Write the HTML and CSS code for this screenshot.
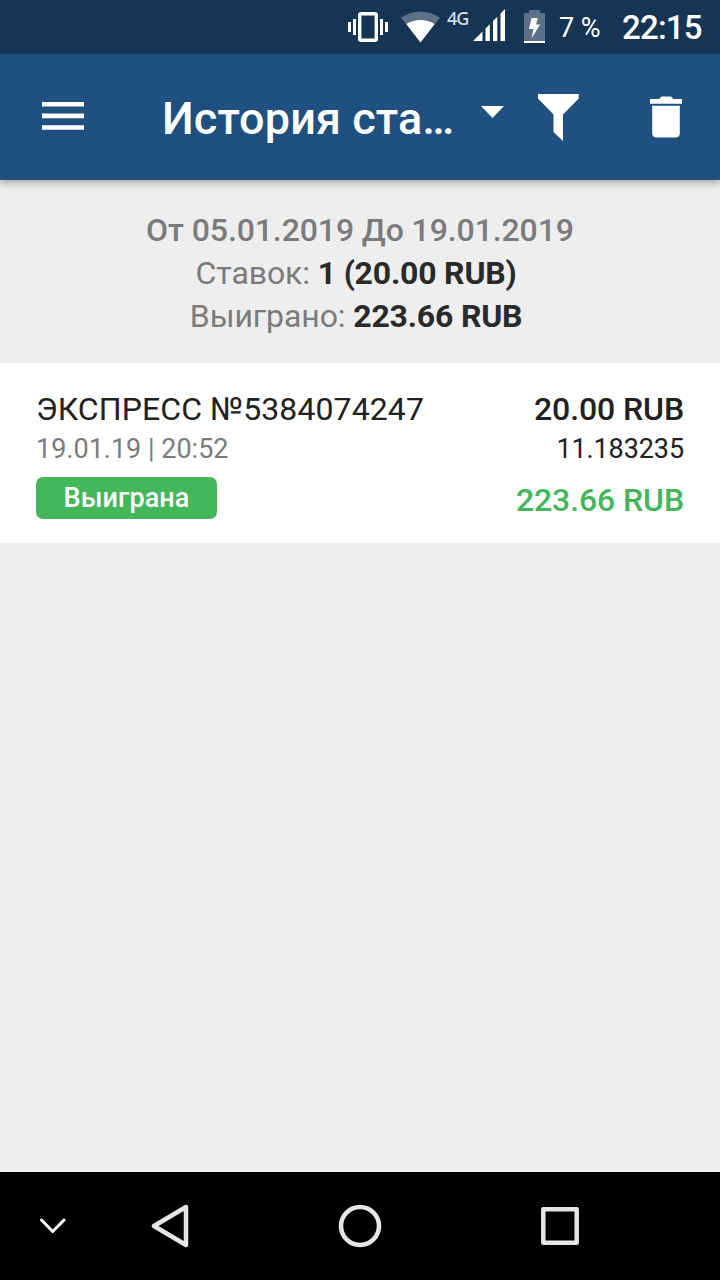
FILE: index.html
```
<!DOCTYPE html>
<html lang="ru">

<head>
	<meta charset="utf-8">
	<meta name="viewport" content="width=device-width, initial-scale=1.0">
	<title>История ставок</title>
	<link rel="stylesheet" href="styles.css">
</head>

<body>
	<div class="statusbar">
		<svg class="vibrate" width="40" height="30" viewBox="0 0 40 30">
			<rect x="11.7" y="1.7" width="16.6" height="26.6" rx="1.5" fill="none" stroke="#fff" stroke-width="3.4" />
			<path d="M1.5 10v10M6.5 7v16M33.500 7v16M38.500 10v10" stroke="#fff" stroke-width="3" />
		</svg>
		<svg class="wifi" width="39" height="32" viewBox="0 0 40 32">
			<path d="M0 6.500Q20-6.500 40 6.500L20 32Z" fill="#5c7089" />
			<path d="M5.500 13Q20 4.500 34.500 13L20 32Z" fill="#fff" />
		</svg>
		<span class="network">4G</span>
		<svg class="signal" width="32" height="32" viewBox="0 0 32 32">
			<path d="M0 32L9.500 22.500V32ZM12.500 19.500L16.800 15.200V32H12.500ZM20 12L24.300 7.700V32H20ZM27.500 4.500L32 0V32H27.500Z" fill="#fff" />
		</svg>
		<svg class="battery" width="21" height="33" viewBox="0 0 21 33">
			<path d="M0 3H5V0H16V3H21V31H0Z" fill="#5c7089" />
			<path d="M0 31H21V33H0Z" fill="#fff" />
			<path d="M7.500 8H14L12 14.500H16L7.500 28.500L9.500 19H5Z" fill="#fff" />
		</svg>
		<span class="percent">7 %</span>
		<span class="clock">22:15</span>
	</div>

	<header>
		<svg class="menu" width="42" height="29" viewBox="0 0 42 29">
			<path d="M0 2.300H42M0 13.900H42M0 25.500H42" stroke="#fff" stroke-width="4.600" />
		</svg>
		<h1>История ста…</h1>
		<svg class="arrow" width="23" height="12" viewBox="0 0 23 12">
			<path d="M0 0H23L11.500 12Z" fill="#fff" />
		</svg>
		<svg class="filter" width="42" height="48" viewBox="0 0 42 48">
			<path d="M0 0H40.700V4.500L25 20.500V47L15.500 38V20.500L0 4.500Z" fill="#fff" />
		</svg>
		<svg class="trash" width="32" height="42" viewBox="0 0 32 42">
			<path d="M0 3H9L11.500 .5H21L23.500 3H32V7.700H0Z" fill="#fff" />
			<path d="M2.200 9.700H29.800V37Q29.800 41.500 25.300 41.500H6.700Q2.200 41.500 2.200 37Z" fill="#fff" />
		</svg>
	</header>

	<main>
		<section class="summary">
			<p class="period">От 05.01.2019 До 19.01.2019</p>
			<p>Ставок: <b>1 (20.00 RUB)</b>&nbsp;</p>
			<p>Выиграно: <b>223.66 RUB</b>&nbsp;</p>
		</section>

		<article class="bet">
			<div class="bet_info">
				<h2>ЭКСПРЕСС №5384074247</h2>
				<p class="date">19.01.19 | 20:52</p>
				<span class="status">Выиграна</span>
			</div>
			<div class="bet_sum">
				<p class="stake">20.00 RUB</p>
				<p class="odds">11.183235</p>
				<p class="win">223.66 RUB</p>
			</div>
		</article>
	</main>

	<nav>
		<svg class="hide" width="28" height="16" viewBox="0 0 28 16">
			<path d="M2.500 2L13.700 13.500L25 2" />
		</svg>
		<svg class="back" width="38" height="44" viewBox="0 0 38 44">
			<path d="M35 3V41L3 22Z" />
		</svg>
		<svg class="home" width="44" height="44" viewBox="0 0 44 44">
			<circle cx="22" cy="22" r="19" />
		</svg>
		<svg class="recent" width="38" height="38" viewBox="0 0 38 38">
			<rect x="2.300" y="2.300" width="33.400" height="33.400" />
		</svg>
	</nav>
</body>

</html>
```
FILE: styles.css
```
* {
	margin: 0;
	box-sizing: border-box;
}

body {
	display: flex;
	flex-direction: column;
	height: 1280px;
	background-color: #eeeeee;
	font-family: Roboto, "Liberation Sans", sans-serif;
	color: #212121;
}

svg {
	display: block;
	flex-shrink: 0;
}

/* status bar */
.statusbar {
	display: flex;
	align-items: flex-start;
	height: 54px;
	padding-left: 348px;
	background-color: #163453;
	color: #fff;
	white-space: nowrap;
}

.vibrate {
	margin-top: 12px;
}

.wifi {
	margin: 11px 0 0 13px;
}

.network {
	width: 26px;
	margin: 7px 0 0 7px;
	font: 500 18px/22px "Noto Sans", sans-serif;
	letter-spacing: -1px;
	color: #d8dee5;
}

.signal {
	margin-top: 9px;
}

.battery {
	margin: 10px 0 0 19px;
}

.percent {
	width: 63px;
	margin: 12px 0 0 14px;
	font-size: 27px;
	line-height: 32px;
}

.clock {
	margin-top: 9px;
	font-size: 33px;
	font-weight: 500;
	line-height: 38px;
	letter-spacing: -0.8px;
}

/* header */
header {
	display: flex;
	align-items: flex-start;
	height: 126px;
	padding-left: 42px;
	background-color: #20507f;
	box-shadow: 0 3px 7px rgba(0, 0, 0, 0.3);
	clip-path: inset(0 0 -12px 0);
}

.menu {
	margin-top: 48px;
}

h1 {
	width: 319px;
	margin: 38px 0 0 78px;
	font-size: 45px;
	font-weight: 500;
	line-height: 54px;
	letter-spacing: 0.1px;
	color: #fff;
	white-space: nowrap;
}

.arrow {
	margin-top: 52px;
}

.filter {
	margin: 40px 0 0 34px;
}

.trash {
	margin: 42px 0 0 70px;
}

/* content */
main {
	flex: 1;
}

.summary {
	height: 183px;
	padding-top: 29px;
	font-size: 32px;
	line-height: 43px;
	letter-spacing: -0.1px;
	text-align: center;
	color: #7b7b7b;
}

.summary b {
	letter-spacing: -0.2px;
	color: #2a2a2a;
}

.period {
	font-weight: 500;
}

.bet {
	display: flex;
	justify-content: space-between;
	height: 180px;
	padding: 27px 36px 0;
	background-color: #fff;
}

h2 {
	font-size: 32px;
	font-weight: 400;
	line-height: 38px;
	letter-spacing: 0.1px;
}

.date {
	margin-top: 4px;
	font-size: 27px;
	line-height: 34px;
	color: #7b7b7b;
}

.status {
	display: block;
	width: 181px;
	height: 42px;
	margin-top: 11px;
	border-radius: 7px;
	background-color: #43b759;
	font-size: 27px;
	font-weight: 500;
	line-height: 42px;
	letter-spacing: 0.1px;
	text-align: center;
	color: #fff;
}

.bet_sum {
	text-align: right;
}

.stake,
.win {
	font-size: 32px;
	font-weight: 500;
	line-height: 38px;
	letter-spacing: -0.1px;
}

.odds {
	margin-top: 4px;
	font-size: 27px;
	line-height: 34px;
	letter-spacing: -0.1px;
}

.win {
	margin-top: 15px;
	color: #43b759;
}

/* navigation buttons */
nav {
	display: flex;
	align-items: center;
	height: 108px;
	padding-left: 39px;
	background-color: #000;
}

nav svg {
	fill: none;
	stroke: #e6e6e6;
	stroke-width: 4.5;
	stroke-linejoin: round;
	stroke-linecap: round;
}

nav .hide {
	stroke: #fff;
	stroke-width: 3;
}

.back {
	margin-left: 84px;
}

.home {
	margin-left: 149px;
}

.recent {
	margin-left: 159px;
}
```
